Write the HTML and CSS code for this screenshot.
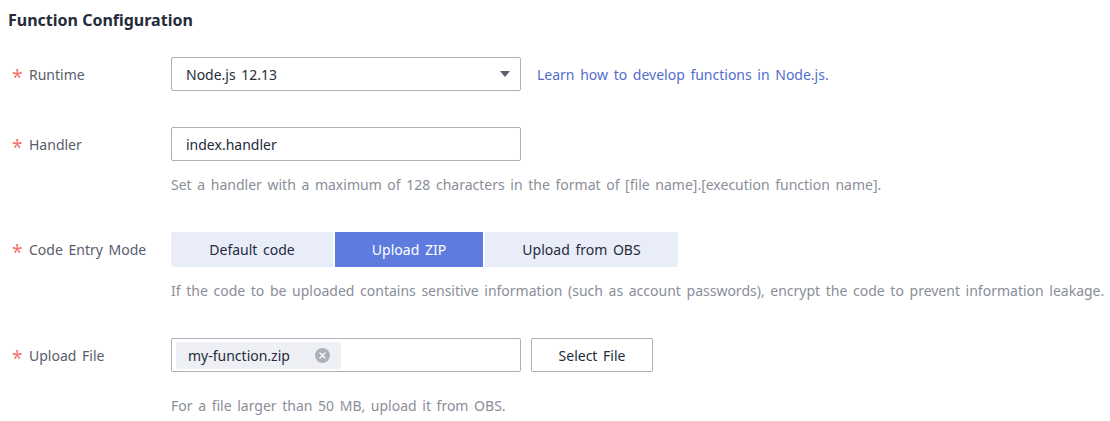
FILE: index.html
```html
<!DOCTYPE html>
<html>
<head>
<meta charset="utf-8">
<link rel="stylesheet" href="styles.css">
</head>
<body>
<div class="page">
  <h2 class="title">Function Configuration</h2>
  <div class="form">
    <div class="row">
      <div class="label"><span class="req">*</span>Runtime</div>
      <div class="control">
        <div class="line">
          <div class="select">
            <span>Node.js 12.13</span>
            <svg class="caret" width="10" height="6" viewBox="0 0 10 6"><path d="M0 0H10L5 6Z" fill="#5a5f6b"/></svg>
          </div>
          <a class="link">Learn how to develop functions in Node.js.</a>
        </div>
      </div>
    </div>
    <div class="row">
      <div class="label"><span class="req">*</span>Handler</div>
      <div class="control">
        <div class="input">index.handler</div>
        <div class="hint">Set a handler with a maximum of 128 characters in the format of [file name].[execution function name].</div>
      </div>
    </div>
    <div class="row">
      <div class="label"><span class="req">*</span>Code Entry Mode</div>
      <div class="control">
        <div class="segments">
          <div class="seg seg-default">Default code</div>
          <div class="seg seg-zip active">Upload ZIP</div>
          <div class="seg seg-obs">Upload from OBS</div>
        </div>
        <div class="hint">If the code to be uploaded contains sensitive information (such as account passwords), encrypt the code to prevent information leakage.</div>
      </div>
    </div>
    <div class="row row-last">
      <div class="label"><span class="req">*</span>Upload File</div>
      <div class="control">
        <div class="line">
          <div class="filebox">
            <div class="tag">
              <span>my-function.zip</span>
              <span class="clear"><svg width="15" height="15" viewBox="0 0 14 14"><circle cx="7" cy="7" r="7" fill="#adb0b8"/><path d="M4.6 4.6L9.4 9.4M9.4 4.6L4.6 9.4" stroke="#fff" stroke-width="1.2" stroke-linecap="round"/></svg></span>
            </div>
          </div>
          <div class="btn">Select File</div>
        </div>
        <div class="hint hint-far">For a file larger than 50 MB, upload it from OBS.</div>
      </div>
    </div>
  </div>
</div>
</body>
</html>
```
FILE: styles.css
```css
* { box-sizing: border-box; }
html, body { margin: 0; padding: 0; background: #fff; }
body {
  font-family: "Noto Sans", "Open Sans", sans-serif;
  font-size: 14px;
  color: #252b3a;
  word-spacing: 2px;
}
.page { padding: 0 8px; }
.title {
  margin: 0;
  padding-top: 8px;
  font-size: 16px;
  line-height: 24px;
  font-weight: 700;
  color: #252b3a;
  word-spacing: 0;
}
.form { padding-top: 25px; }
.row { display: flex; margin-bottom: 36px; }
.row-last { margin-bottom: 0; }
.label {
  flex: 0 0 163px;
  padding-left: 4px;
  height: 34px;
  display: flex;
  align-items: center;
  color: #575d6c;
  white-space: nowrap;
}
.req {
  color: #f66f6a;
  width: 17px;
  font-size: 19px;
  line-height: 20px;
  padding-top: 6px;
}
.control { flex: 1; }
.line { display: flex; align-items: center; }
.select, .input, .filebox {
  width: 350px;
  height: 34px;
  border: 1px solid #adb0b8;
  border-radius: 2px;
  display: flex;
  align-items: center;
  padding: 0 14px;
}
.select { justify-content: space-between; padding-right: 10px; }
.link { margin-left: 16px; color: #526ecc; text-decoration: none; }
.hint { margin-top: 13px; line-height: 22px; color: #8a8e99; white-space: nowrap; }
.hint-far { margin-top: 23px; }
.segments { display: flex; gap: 2px; height: 35px; }
.seg {
  background: #e9edfa;
  display: flex;
  align-items: center;
  justify-content: center;
  color: #252b3a;
}
.seg-default { width: 162px; border-radius: 3px 0 0 3px; }
.seg-zip { width: 148px; }
.seg-obs { width: 193px; border-radius: 0 3px 3px 0; }
.seg.active { background: #5e7ce0; color: #fff; }
.filebox { padding: 0 4px; }
.tag {
  width: 165px;
  height: 27px;
  background: #eef0f5;
  border-radius: 2px;
  display: flex;
  align-items: center;
  justify-content: space-between;
  padding: 0 11px 0 12px;
}
.clear { display: flex; }
.btn {
  margin-left: 10px;
  width: 122px;
  height: 34px;
  border: 1px solid #adb0b8;
  border-radius: 2px;
  display: flex;
  align-items: center;
  justify-content: center;
}
```
